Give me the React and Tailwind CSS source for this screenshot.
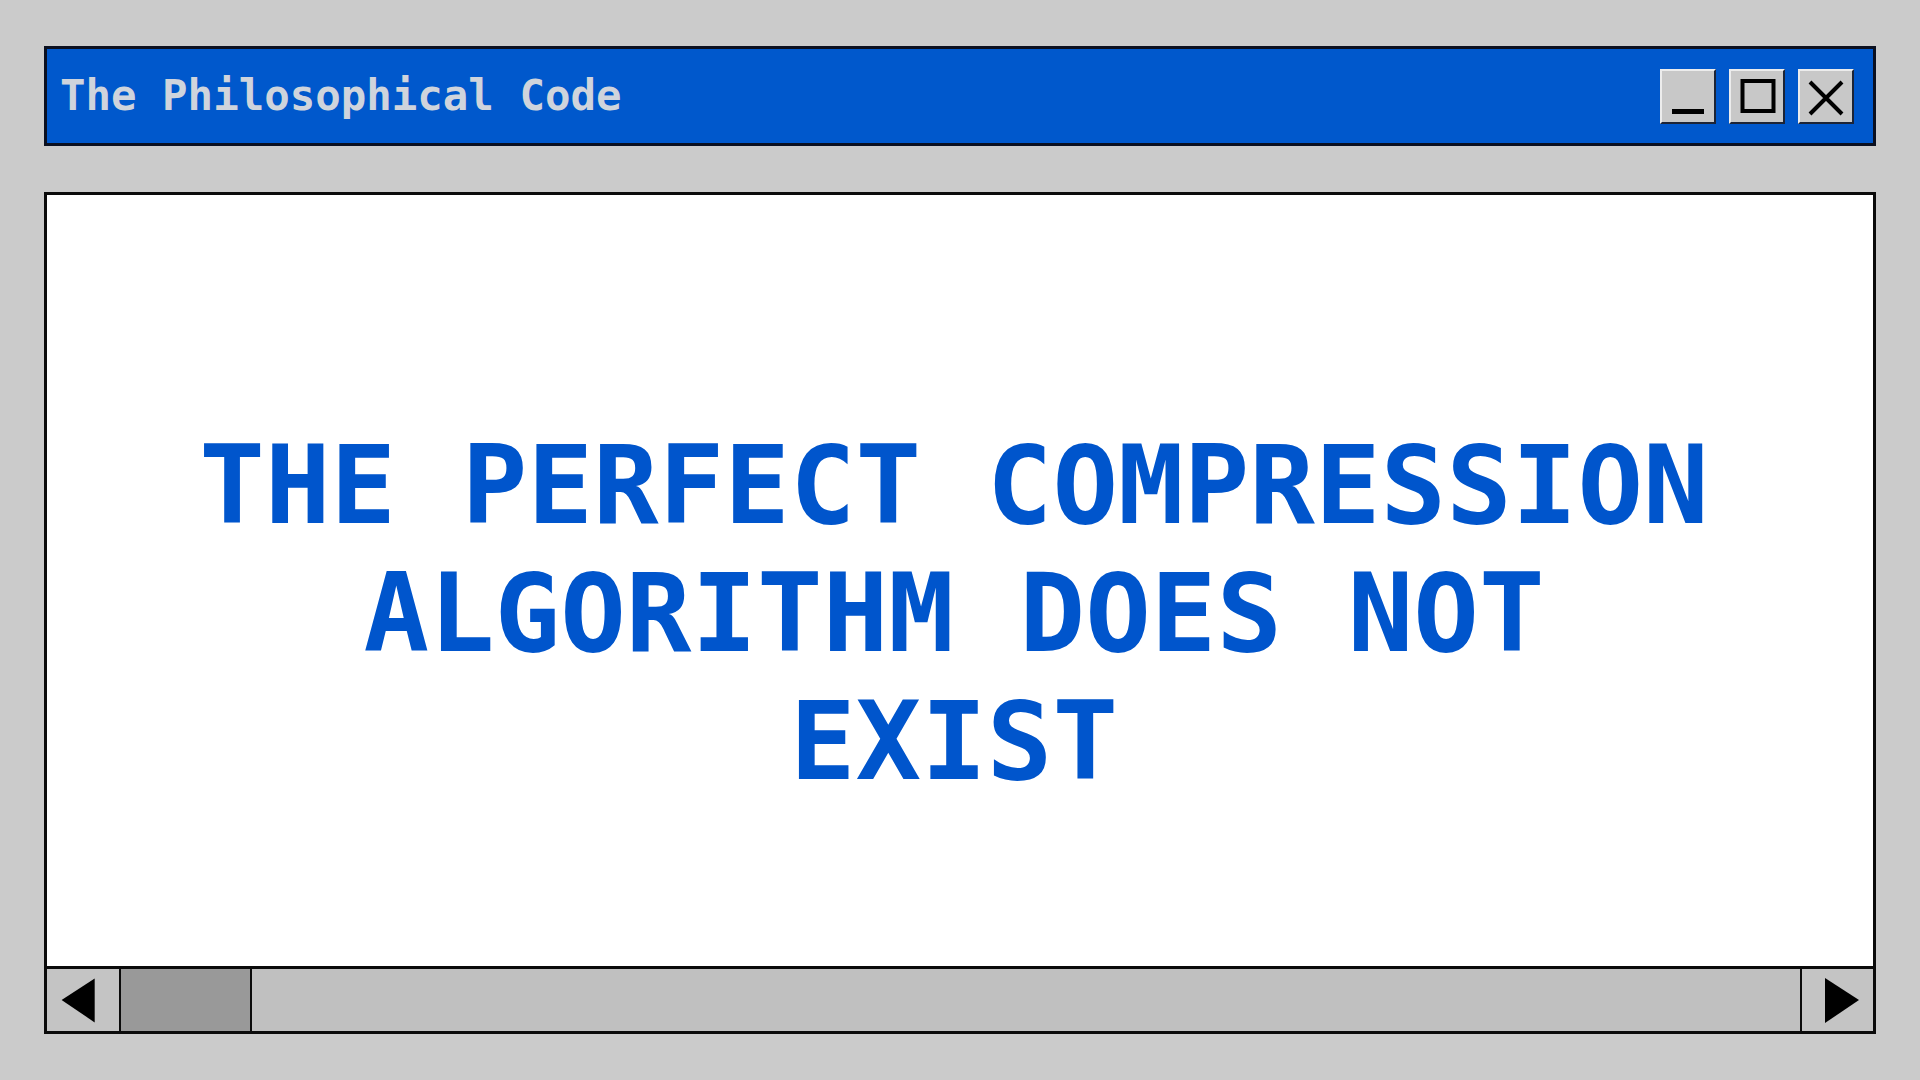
import React from "react";

const mono = { fontFamily: '"DejaVu Sans Mono", "Liberation Mono", monospace' };

function WinButton({ children }) {
  return (
    <div className="w-[56px] h-[55px] bg-[#c8c8c8] border-2 border-t-[#ececec] border-l-[#ececec] border-r-[#1c2436] border-b-[#1c2436] flex items-center justify-center">
      {children}
    </div>
  );
}

export default function App() {
  return (
    <div className="w-[1920px] h-[1080px] bg-[#cbcbcb] px-[44px] py-[46px] flex flex-col gap-[46px] overflow-hidden">
      {/* Title bar */}
      <div className="h-[100px] shrink-0 border-[3px] border-[#0b1020] bg-[#0058cc] flex items-center justify-between pl-[13px] pr-[19px]">
        <div
          className="text-[42.4px] font-bold text-[#cfd4dc] leading-none whitespace-pre"
          style={mono}
        >
          The Philosophical Code
        </div>
        <div className="flex items-center gap-[13px]">
          <WinButton>
            <svg width="52" height="51" viewBox="0 0 52 51">
              <rect x="10" y="38" width="32" height="5" fill="#000" />
            </svg>
          </WinButton>
          <WinButton>
            <svg width="52" height="51" viewBox="0 0 52 51">
              <rect x="11.5" y="10" width="31" height="30" fill="none" stroke="#000" strokeWidth="4" />
            </svg>
          </WinButton>
          <WinButton>
            <svg width="52" height="51" viewBox="0 0 52 51">
              <path d="M10 11 L42 43 M42 11 L10 43" stroke="#000" strokeWidth="4" fill="none" />
            </svg>
          </WinButton>
        </div>
      </div>

      {/* Window body */}
      <div className="flex-1 border-[3px] border-[#0b0b0b] bg-white flex flex-col">
        <div className="flex-1 flex items-center justify-center pt-[66px] pr-[12px]">
          <h1
            className="text-[109px] leading-[128px] font-bold text-[#0055cc] text-center"
            style={mono}
          >
            THE PERFECT COMPRESSION
            <br />
            ALGORITHM DOES NOT
            <br />
            EXIST
          </h1>
        </div>

        {/* Scrollbar */}
        <div className="h-[65px] shrink-0 border-t-[3px] border-[#0b0b0b] bg-[#c0c0c0] flex">
          <div className="w-[74px] h-full bg-[#c4c4c4] border-r-[2px] border-[#0b0b0b] flex items-center justify-center">
            <svg width="74" height="62" viewBox="0 0 74 62">
              <polygon points="15,31 49,9 49,54" fill="#000" />
            </svg>
          </div>
          <div className="w-[131px] h-full bg-[#999999] border-r-[2px] border-[#0b0b0b]" />
          <div className="flex-1 h-full bg-[#c0c0c0]" />
          <div className="w-[73px] h-full bg-[#c4c4c4] border-l-[2px] border-[#0b0b0b] flex items-center justify-center">
            <svg width="71" height="62" viewBox="0 0 71 62">
              <polygon points="23,9 57,31 23,54" fill="#000" />
            </svg>
          </div>
        </div>
      </div>
    </div>
  );
}
